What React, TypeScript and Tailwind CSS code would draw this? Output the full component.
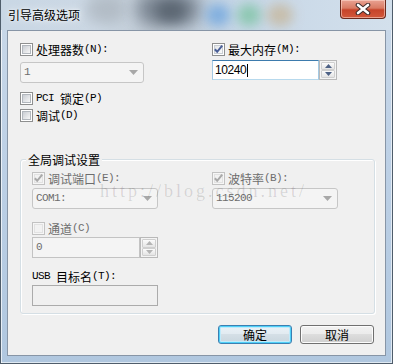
import React from "react";

function Txt({ s, className = "" }: { s: string; className?: string }) {
  const runs: { t: string; a: boolean }[] = [];
  for (const ch of s) {
    const a = ch.charCodeAt(0) < 128;
    const last = runs[runs.length - 1];
    if (last && last.a === a) last.t += ch;
    else runs.push({ t: ch, a });
  }
  return (
    <span className={"inline-flex items-center whitespace-pre leading-[13px] " + className}>
      {runs.map((r, i) =>
        r.a ? (
          <span key={i} className="font-['Liberation_Mono',monospace] text-[11px] tracking-[-0.6px]">
            {r.t}
          </span>
        ) : (
          <span key={i} className="font-['Noto_Sans_CJK_SC',sans-serif] text-[12px]">
            {r.t}
          </span>
        )
      )}
    </span>
  );
}

function Box({ checked = false, disabled = false }: { checked?: boolean; disabled?: boolean }) {
  return (
    <span
      className={
        disabled
          ? "relative flex h-[13px] w-[13px] shrink-0 items-center justify-center border border-[#c2c2c2] bg-[#f6f6f6]"
          : "relative flex h-[13px] w-[13px] shrink-0 items-center justify-center border border-[#8e8f8f] bg-white"
      }
    >
      <span
        className={
          disabled
            ? "h-[9px] w-[9px] border border-[#e2e2e2] bg-[#f2f2f2]"
            : checked
            ? "h-[9px] w-[9px] border border-[#c9ced4] bg-[linear-gradient(135deg,#e4e6e9,#fbfbfb)]"
            : "h-[9px] w-[9px] border border-[#b2b7bd] bg-[linear-gradient(135deg,#c9cdd3,#f7f7f7)]"
        }
      />
      {checked && (
        <svg className="absolute left-0 top-0" width="11" height="11" viewBox="0 0 11 11">
          <path
            d="M1.8 5.2 L4.2 7.8 L9.2 1.6"
            fill="none"
            stroke={disabled ? "#a9a9a9" : "#4a5f97"}
            strokeWidth="2"
          />
        </svg>
      )}
    </span>
  );
}

function Check({
  label,
  checked = false,
  disabled = false,
  className = "",
}: {
  label: string;
  checked?: boolean;
  disabled?: boolean;
  className?: string;
}) {
  return (
    <div className={"flex h-[13px] items-center gap-[3px] " + className}>
      <Box checked={checked} disabled={disabled} />
      <Txt s={label} className={disabled ? "text-[#6d6d6d]" : "text-black"} />
    </div>
  );
}

function Combo({ value, className = "" }: { value: string; className?: string }) {
  return (
    <div
      className={
        "flex h-[21px] items-center justify-between rounded-[3px] border border-[#c6c6c6] bg-[#f4f4f4] pl-[3px] pr-[5px] " +
        className
      }
    >
      <Txt s={value} className="text-[#6d6d6d]" />
      <svg width="9" height="5" viewBox="0 0 9 5">
        <path d="M0 0 H9 L4.5 5 Z" fill="#a8a8a8" />
      </svg>
    </div>
  );
}

function Spin({ disabled = false, h }: { disabled?: boolean; h: string }) {
  const arrow = disabled ? "#b4b4b4" : "#4d6185";
  return (
    <div
      className={
        "flex w-[18px] flex-col border border-[#b9b9b9] bg-[#f4f4f4] p-[1px] " + h
      }
    >
      <div className="flex flex-1 items-center justify-center rounded-[1px] border border-[#cfcfcf] bg-[linear-gradient(#fbfbfb,#e4e4e4)]">
        <svg width="7" height="4" viewBox="0 0 7 4">
          <path d="M0 4 H7 L3.5 0 Z" fill={arrow} />
        </svg>
      </div>
      <div className="flex flex-1 items-center justify-center rounded-[1px] border border-[#cfcfcf] bg-[linear-gradient(#fbfbfb,#e4e4e4)]">
        <svg width="7" height="4" viewBox="0 0 7 4">
          <path d="M0 0 H7 L3.5 4 Z" fill={arrow} />
        </svg>
      </div>
    </div>
  );
}

export default function App() {
  return (
    <div className="relative h-[364px] w-[393px] overflow-hidden border-x border-b border-[#4f5d6b] bg-[linear-gradient(180deg,#cad9e9,#bed1e6_40%,#b0c7df)] shadow-[inset_1px_0_0_rgba(255,255,255,0.7),inset_-1px_-1px_0_rgba(255,255,255,0.6)]">
      {/* title bar */}
      <div className="relative h-[30px] overflow-hidden bg-[linear-gradient(90deg,#c9d7e5,#ccd8e4_25%,#bfc9d3_40%,#c6d6e6_60%,#d3e0ec)]">
        <div className="pointer-events-none absolute left-[85px] top-[-6px] h-[30px] w-[40px] rounded-full bg-[#a9b2bb] opacity-70 blur-[7px]" />
        <div className="pointer-events-none absolute left-[135px] top-[-8px] h-[34px] w-[65px] rounded-full bg-[#6b7683] opacity-80 blur-[8px]" />
        <div className="pointer-events-none absolute left-[155px] top-[0px] h-[22px] w-[30px] rounded-full bg-[#4f5a66] opacity-70 blur-[6px]" />
        <div className="pointer-events-none absolute left-[205px] top-[4px] h-[22px] w-[24px] rounded-full bg-[#79abdf] opacity-90 blur-[6px]" />
        <div className="pointer-events-none absolute left-[236px] top-[4px] h-[22px] w-[24px] rounded-full bg-[#86c6ab] opacity-90 blur-[6px]" />
        <div className="pointer-events-none absolute left-[266px] top-[4px] h-[22px] w-[26px] rounded-full bg-[#c6b79c] opacity-80 blur-[6px]" />
        <div className="absolute left-[7px] top-[7px] font-['Noto_Sans_CJK_SC',sans-serif] text-[12px] leading-[16px] text-black [text-shadow:0_0_8px_rgba(255,255,255,0.95),0_0_3px_rgba(255,255,255,0.9)]">
          引导高级选项
        </div>
        {/* close button */}
        <div className="absolute right-[6px] top-0 flex h-[19px] w-[46px] items-center justify-center rounded-b-[4px] border border-t-0 border-[#6b2a1e] bg-[linear-gradient(180deg,#e9a293,#d97b64_45%,#c7442a_55%,#d2583b)] shadow-[inset_0_0_0_1px_rgba(255,220,210,0.55)]">
          <svg width="16" height="12" viewBox="0 0 16 12">
            <path d="M3 2 L13 10 M13 2 L3 10" stroke="#3c2a2a" strokeWidth="4.6" strokeLinecap="round" />
            <path d="M3 2 L13 10 M13 2 L3 10" stroke="#ffffff" strokeWidth="2.6" strokeLinecap="round" />
          </svg>
        </div>
      </div>

      {/* client area */}
      <div className="ml-[6px] flex h-[326px] w-[379px] flex-col border border-[#8795a6] bg-[#f0f0f0] pl-[12px] pr-[11px]">
        <div className="mt-[12px] flex">
          <div className="flex w-[192px] flex-col">
            <Check label="处理器数(N):" />
            <Combo value="1" className="mt-[6px] w-[124px]" />
          </div>
          <div className="flex flex-col">
            <Check label="最大内存(M):" checked />
            <div className="mt-[4px] flex">
              <div className="flex h-[20px] w-[107px] items-center border border-t-[#3d7bad] border-x-[#a4c9e3] border-b-[#b7d9ed] bg-white pl-[2px]">
                <span className="font-['Liberation_Sans',sans-serif] text-[12px] leading-[14px] tracking-[-0.4px] text-black">
                  10240
                </span>
                <span className="ml-[1px] h-[13px] w-[1px] bg-black" />
              </div>
              <Spin h="h-[20px]" />
            </div>
          </div>
        </div>
        <Check label="PCI 锁定(P)" className="mt-[9px]" />
        <Check label="调试(D)" className="mt-[4px]" />

        {/* group box */}
        <div className="relative mt-[37px] flex w-[355px] flex-col rounded-[3px] border border-[#d5dfe5] pb-[7px] pl-[11px] pt-[12px] shadow-[inset_1px_1px_0_#ffffff,1px_1px_0_#ffffff]">
          <div className="absolute left-[5px] top-[-8px] bg-[#f0f0f0] px-[2px] font-['Noto_Sans_CJK_SC',sans-serif] text-[12px] leading-[15px] text-black">
            全局调试设置
          </div>
          <div className="flex">
            <div className="flex w-[180px] flex-col">
              <Check label="调试端口(E):" checked disabled />
              <Combo value="COM1:" className="mt-[3px] w-[126px]" />
            </div>
            <div className="flex flex-col">
              <Check label="波特率(B):" checked disabled />
              <Combo value="115200" className="mt-[3px] w-[126px]" />
            </div>
          </div>
          <Check label="通道(C)" disabled className="mt-[13px]" />
          <div className="mt-[2px] flex">
            <div className="flex h-[21px] w-[108px] items-center border border-[#c3c3c3] bg-[#f4f4f4] pl-[3px]">
              <Txt s="0" className="text-[#6d6d6d]" />
            </div>
            <Spin disabled h="h-[21px]" />
          </div>
          <div className="mt-[12px] flex h-[13px] items-center">
            <Txt s="USB 目标名(T):" className="text-black" />
          </div>
          <div className="mt-[2px] h-[21px] w-[126px] border border-[#ababab] bg-[#f0f0f0]" />
        </div>

        {/* buttons */}
        <div className="mt-[11px] flex justify-end gap-[8px]">
          <div className="flex h-[19px] w-[74px] items-center justify-center rounded-[3px] border border-[#3c7fb1] bg-[linear-gradient(#eaf2f7,#e1eaf0_50%,#d4dfe6_50%,#c9d6de)] shadow-[inset_0_0_0_1px_#4fd0f8,inset_0_0_0_2px_#c0ebfb] font-['Noto_Sans_CJK_SC',sans-serif] text-[12px] leading-[14px] text-black">
            确定
          </div>
          <div className="flex h-[19px] w-[74px] items-center justify-center rounded-[3px] border border-[#707070] bg-[linear-gradient(#f2f2f2,#ebebeb_50%,#dddddd_50%,#cfcfcf)] shadow-[inset_0_0_0_1px_#fcfcfc] font-['Noto_Sans_CJK_SC',sans-serif] text-[12px] leading-[14px] text-black">
            取消
          </div>
        </div>
      </div>

      {/* watermark */}
      <div className="pointer-events-none absolute left-[99px] top-[182px] whitespace-nowrap font-['Liberation_Serif',serif] text-[18px] leading-[18px] tracking-[3px] text-[rgba(0,0,0,0.13)]">
        http://blog.csdn.net/
      </div>
    </div>
  );
}
